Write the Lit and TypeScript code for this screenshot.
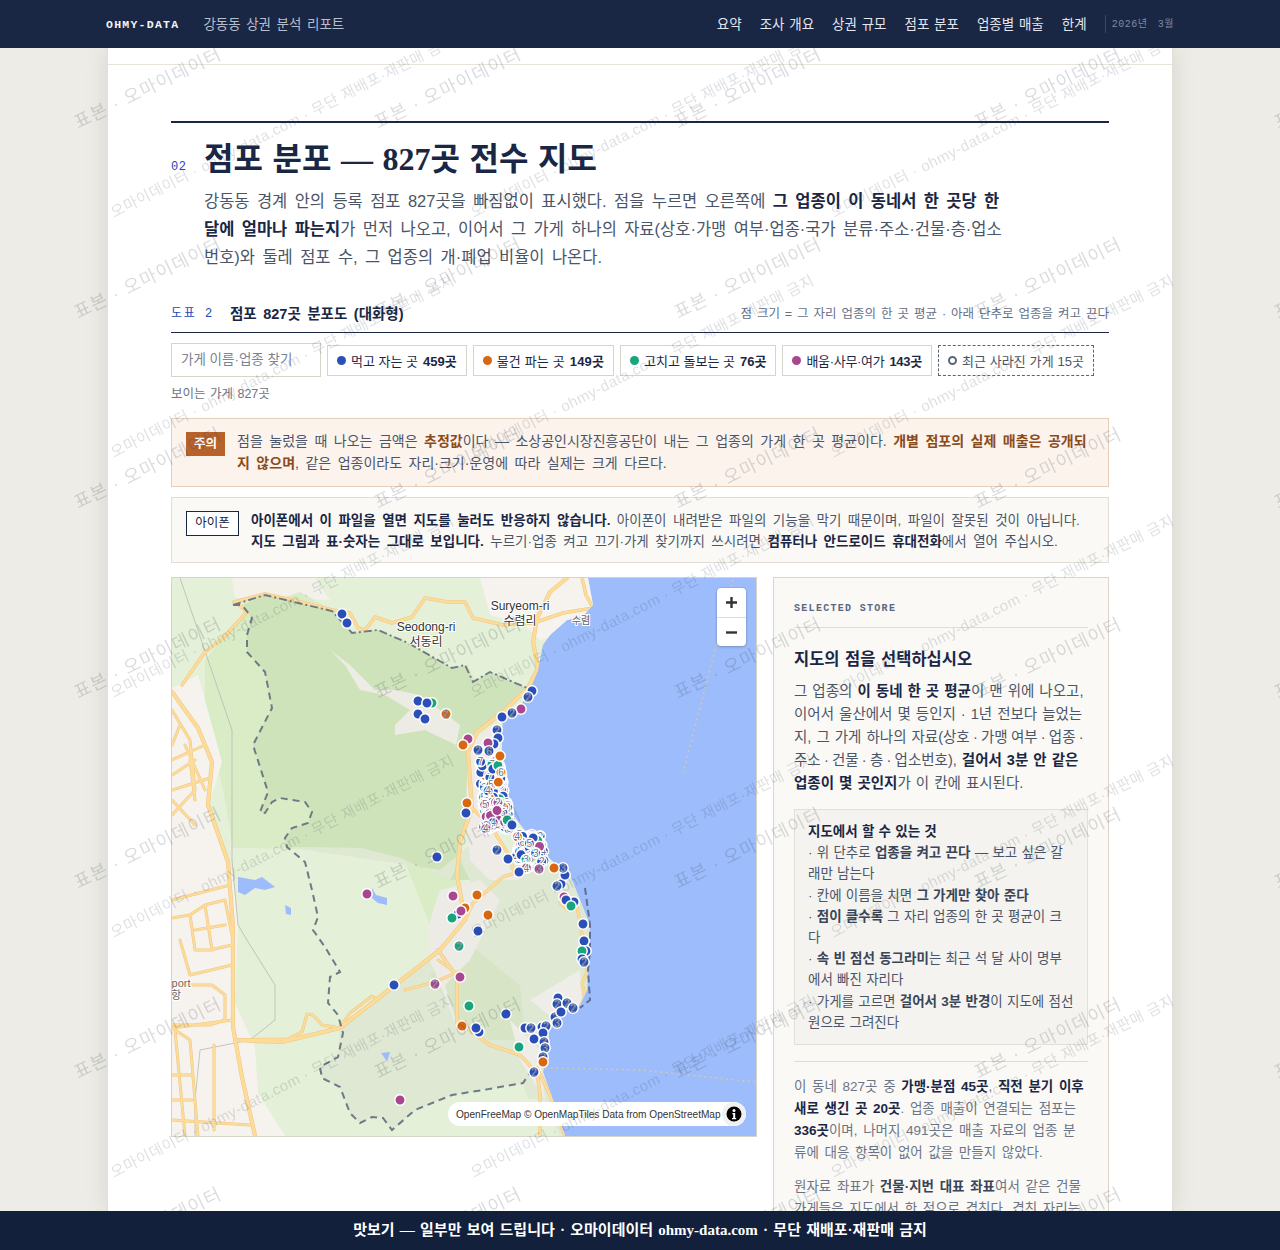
import { LitElement, html, css, svg } from "lit";
import { customElement } from "lit/decorators.js";

const BLUE = "#2a4fb9", ORANGE = "#d9670f", GREEN = "#17a57c", PURPLE = "#a8478f";
type M = [number, number, string, string?];

const roads: [string, number][] = [
  ["M234 602L265 594L292 600L332 610L350 613L358 628L365 630L375 617L392 623L412 617L425 598L448 602L465 602L473 618L503 625L533 623L563 613L593 608L586 595L582 578", 2.5],
  ["M567 578L550 592L537 618L533 642L538 668L528 688L503 712L477 732L468 752L472 808L460 842L457 875L465 920L440 950L340 1028L282 1042L235 1040", 3.2],
  ["M472 808L490 825L507 852L515 873L503 877L473 903L465 920", 2.4],
  ["M438 950L457 977L457 1023L463 1025L490 1045L520 1055L537 1073L540 1093L540 1136", 2.6],
  ["M537 1068L550 1095L565 1136", 2.6],
  ["M560 903L568 910L577 907L583 940L587 973L582 983L585 997L580 1007", 2.2],
  ["M405 990L435 982L458 972", 2],
  ["M340 1027L350 1013L372 996L378 1000", 2],
  ["M237 1040L288 1039L302 1032L307 1014L313 1015L322 1025L335 1027", 2.2],
  ["M172 692L198 728L212 762L208 805L228 862L233 927L233 1027L242 1077L255 1136", 3.2],
  ["M182 685L205 652L223 638L247 612L235 602", 2.4],
  ["M172 710L190 740L195 790M172 760L205 745M172 790L210 778M172 800L195 825M195 790L172 815M190 760L195 800M180 725L172 745M195 760L172 775M185 745L205 790", 2],
  ["M172 900L230 885M172 918L190 915L205 905L225 900L232 935M190 915L195 950L210 950L232 945M195 930L225 925M205 905L212 950M180 940L190 975L232 965M172 985L212 985L225 995L225 1020L210 1025L172 1025M232 1020L172 1028L190 1040L198 1136M175 1030L185 1136M172 1075L192 1075M172 1100L192 1100M172 1120L250 1125M214 1045L214 1130", 2],
  ["M438 960L455 972", 1.8],
];

const named: M[] = [
  [342,614,BLUE],[347,623,BLUE],[418,701,BLUE],[432,703,GREEN],[427,703,BLUE],[418,714,BLUE],[425,719,BLUE],[446,714,ORANGE,"2"],[437,857,BLUE],
  [532,691,BLUE],[528,697,BLUE,"2"],[521,709,PURPLE],[512,713,BLUE,"2"],[502,717,BLUE],[497,730,BLUE,"2"],[498,738,BLUE],[494,744,BLUE],[468,739,PURPLE],[463,745,ORANGE],[478,750,BLUE,"2"],[488,743,PURPLE],[489,751,BLUE,"6"],
  [467,803,ORANGE],[466,813,BLUE],[497,850,BLUE,"2"],[508,859,BLUE],[519,872,BLUE],
  [367,894,PURPLE],[453,896,PURPLE],[458,914,BLUE],[452,918,GREEN],[465,908,ORANGE],[461,911,PURPLE],[459,946,GREEN,"2"],[460,977,PURPLE],[435,984,PURPLE,"2"],[394,985,BLUE],[462,1026,ORANGE],[400,1100,PURPLE],
  [477,895,ORANGE],[488,915,ORANGE],[478,931,BLUE],[469,1006,GREEN],[506,1014,BLUE],[479,1032,BLUE],[476,1028,BLUE],[519,1047,GREEN],[534,1039,BLUE],[534,1072,BLUE,"2"],
  [525,1028,BLUE],[531,1028,BLUE,"2"],[542,1027,BLUE],[546,1026,BLUE,"2"],[543,1033,BLUE],[544,1042,BLUE,"3"],[545,1048,BLUE,"3"],[543,1057,BLUE,"3"],[543,1062,ORANGE],
  [558,998,BLUE],[557,1004,BLUE,"2"],[567,1003,BLUE,"2"],[573,1008,BLUE,"2"],[555,1017,BLUE,"2"],[557,1023,BLUE,"3"],[561,1012,BLUE],
  [583,924,BLUE],[584,941,BLUE],[586,951,BLUE],[582,951,GREEN],[582,959,BLUE],[584,962,BLUE,"2"],
  [561,884,BLUE],[557,886,BLUE,"2"],[564,897,PURPLE],[574,902,BLUE],[566,900,BLUE],[571,906,GREEN],[565,875,BLUE],[563,868,BLUE,"3"],
  [500,756,ORANGE],[512,825,BLUE],[554,868,ORANGE],[539,869,PURPLE,"3"],
];

function cluster(): M[] {
  let s = 1;
  const r = () => { const v = Math.sin(s++ * 12.9898) * 43758.5453; return v - Math.floor(v); };
  const colors = [BLUE, BLUE, BLUE, BLUE, PURPLE, BLUE, ORANGE, GREEN, BLUE, PURPLE];
  const areas = [[480, 760, 24, 42, 90], [482, 802, 27, 27, 80], [516, 834, 28, 34, 80]];
  const out: M[] = [];
  for (const [x, y, w, h, n] of areas) {
    for (let i = 0; i < n; i++) {
      const lbl = r() < 0.75 ? String(2 + Math.floor(r() * 6)) : undefined;
      out.push([x + r() * w, y + r() * h, colors[Math.floor(r() * colors.length)], lbl]);
    }
  }
  return out;
}
const dense = cluster();

@customElement("app-root")
export class AppRoot extends LitElement {
  static styles = css`
    :host { display: block; position: relative; width: 1280px; height: 1250px; overflow: hidden; background: #edece7; color: #1a2744;
      font-family: "Liberation Sans", "Noto Sans CJK KR", sans-serif; }
    * { box-sizing: border-box; }
    .shell { display: flex; flex-direction: column; height: 1250px; }
    header { position: relative; z-index: 10; flex: none; height: 48px; background: #1a2744; display: flex; align-items: center; padding: 0 106px 3px; }
    .brand { font: bold 11.5px "Liberation Mono", monospace; letter-spacing: 1.25px; color: #f3f4f7; margin: 3px 24px 0 0; }
    .sub { font-size: 13.5px; word-spacing: 1.8px; color: #b6bdcc; }
    nav { margin-left: auto; display: flex; align-items: center; gap: 18px; font-size: 13.5px; word-spacing: 1px; color: #e3e6ed; }
    .date { font: 10px "Liberation Mono", "Noto Sans CJK KR", monospace; color: #7f8aa1; border-left: 1px solid #3a4765; height: 18px; line-height: 20px; margin-top: 3px; padding-left: 6px; letter-spacing: .55px; white-space: pre; word-spacing: -1.5px; }
    main { flex: 1; min-height: 0; overflow: hidden; width: 1066px; margin: 0 auto; background: #fff; box-shadow: 0 0 22px rgba(60,50,30,.12); border-left: 1px solid #e2dfd7; border-right: 1px solid #e2dfd7; padding: 16px 63px 0; }
    .toprule { height: 1px; background: #e8e4dc; margin: 0 -63px 56px; }
    .sec { border-top: 2px solid #1a2744; display: grid; grid-template-columns: 33px 1fr; padding-top: 13px; }
    .num { font: 12px "Liberation Mono", monospace; color: #2148b8; letter-spacing: .6px; padding-top: 24px; }
    h1 { margin: 1px 0 0; font: bold 32px/44px "Liberation Serif", "Noto Sans CJK KR", serif; word-spacing: 1.6px; color: #1a2744; }
    .lead { margin: 6px 0 0; grid-column: 2; width: 800px; font-size: 16.5px; word-spacing: 2.8px; line-height: 28px; color: #4a5568; }
    .lead b { color: #1a2744; }
    .fighead { display: flex; align-items: center; margin-top: 29px; height: 33px; padding-bottom: 8px; border-bottom: 1px solid #1a2744; }
    .figno { font: 12px "Liberation Mono", "Noto Sans CJK KR", monospace; color: #2148b8; letter-spacing: 1.6px; width: 59px; white-space: pre; }
    .figt { font-weight: bold; font-size: 14.5px; word-spacing: 2.5px; }
    .fign { margin-left: auto; font-size: 12.5px; word-spacing: 1.5px; color: #667085; }
    .ctrl { display: flex; align-items: center; gap: 6px; margin-top: 10px; height: 34px; }
    .search { width: 150px; height: 34px; border: 1px solid #d9d4c9; padding: 0 9px; font-size: 13.5px; line-height: 32px; color: #7b8290; background: #fff; }
    .chip { height: 31px; border: 1px solid #d9d4c9; background: #fff; display: flex; align-items: center; gap: 5px; padding: 0 9px; font-size: 13px; color: #1a2744; white-space: nowrap; }
    .chip.c2 { letter-spacing: .15px; }
    .chip.c4 { letter-spacing: -.3px; }
    .chip i { width: 9px; height: 9px; border-radius: 50%; }
    .chip.gone { border: 1px dashed #5b6578; color: #4a5568; letter-spacing: .1px; }
    .chip.gone i { border: 2px solid #5b6578; }
    .count { font-size: 12.5px; word-spacing: 1px; color: #6b7585; margin: 9px 0 16px; line-height: 16px; }
    .note { display: flex; align-items: flex-start; gap: 12px; padding: 11px 14px 12px; border: 1px solid #e5cfbb; background: #fbf3ec; font-size: 14px; word-spacing: 2.6px; line-height: 22px; color: #4a5568; }
    .note b { color: #8a4b1c; }
    .badge { flex: none; background: #b8622b; color: #fff; font-weight: bold; font-size: 12.5px; word-spacing: 0; height: 24px; width: 39px; line-height: 24px; text-align: center; margin-top: 2px; }
    .note.ios { margin-top: 10px; padding: 12px 14px 10px; background: #faf9f6; border-color: #e2ded4; font-size: 13.5px; word-spacing: 2.7px; line-height: 21px; }
    .note.ios b { color: #1a2744; }
    .ios .badge { background: #fff; color: #1a2744; border: 1px solid #1a2744; width: 53px; height: 25px; line-height: 23px; font-weight: normal; margin-top: 1px; }
    .cols { display: grid; grid-template-columns: 586px 336px; gap: 16px; margin-top: 14px; align-items: start; }
    .map { position: relative; height: 560px; border: 1px solid #d8d3c8; overflow: hidden; background: #9dbcfb; }
    .map svg { display: block; }
    .zoom { position: absolute; left: 545px; top: 10px; width: 29px; height: 58px; background: #fff; border-radius: 4px; box-shadow: 0 0 0 1px rgba(0,0,0,.05), 0 1px 3px rgba(0,0,0,.2); display: grid; grid-template-rows: 1fr 1fr; }
    .zoom div { display: flex; align-items: center; justify-content: center; }
    .zoom div + div { border-top: 1px solid #ddd; }
    .attr { position: absolute; right: 10px; bottom: 10px; height: 24px; width: 298px; border-radius: 12px; background: #fff; display: flex; align-items: center; padding-left: 8px; font-size: 10.1px; color: #333; white-space: nowrap; }
    .attr .ico { position: absolute; right: 0; top: 0; width: 24px; height: 24px; border-radius: 50%; background: #f0f0f0; display: flex; align-items: center; justify-content: center; }
    aside { border: 1px solid #ddd6c8; background: #faf9f5; padding: 0 20px 30px; height: 800px; }
    .kicker { font: bold 10px "Liberation Mono", monospace; letter-spacing: 1.3px; color: #5b6780; padding: 24px 0 12px; line-height: 13px; border-bottom: 1px solid #e1dcd1; }
    h2 { margin: 19px 0 9px; font-size: 16.5px; word-spacing: 1px; line-height: 24px; font-weight: bold; }
    .ptxt { margin: 0; font-size: 14.5px; word-spacing: 1px; line-height: 23px; color: #4a5568; }
    .ptxt b { color: #1a2744; }
    .ptxt .t { word-spacing: -.8px; }
    .tips { margin-top: 14px; background: #f4f3ef; border: 1px solid #e4e0d6; padding: 11px 13px 11px; font-size: 13.5px; word-spacing: .5px; line-height: 21.2px; color: #4a5568; }
    .tips strong { color: #1a2744; display: block; }
    .tips b { color: #3a4558; }
    .sep { height: 1px; background: #e1dcd1; margin: 16px 0 14px; }
    .small { margin: 0 0 12px; padding-right: 2px; font-size: 13.5px; word-spacing: 1.9px; line-height: 22px; color: #6b7585; }
    .small b { color: #1a2744; }
    .small b.m { color: #3a4558; }
    footer { position: relative; z-index: 10; flex: none; height: 39px; background: #12203c; color: #fff; font: bold 15px/38px "Liberation Serif", "Noto Sans CJK KR", serif; word-spacing: 1.5px; text-align: center; }
    .wm { position: absolute; left: 0; top: 0; z-index: 5; pointer-events: none; }
  `;

  private mapSvg() {
    const d = roads;
    return html`<svg width="584" height="558" viewBox="172 578 584 558" xmlns="http://www.w3.org/2000/svg">
      ${svg`
      <defs><clipPath id="land"><path d="M172 578L588 578L593 605L583 616L567 620L550 635L543 645L538 670L530 690L520 707L503 715L502 735L502 795L513 815L540 850L557 865L567 868L580 900L590 925L590 950L588 970L587 990L580 1005L567 1010L550 1025L547 1050L543 1072L553 1100L565 1136L172 1136Z"/></clipPath></defs>
      <rect x="172" y="578" width="584" height="558" fill="#9dbcfb"/>
      <g clip-path="url(#land)">
        <rect x="172" y="578" width="584" height="558" fill="#e4f0d7"/>
        <path d="M232 578L315 578L330 600L235 598Z" fill="#f3f1ea"/>
        <path d="M480 578L600 578L600 625L540 640L525 625L490 615Z" fill="#f6f3ef"/>
        <path d="M205 660L247 610L300 592L332 610L352 632L382 630L408 645L452 668L467 665L477 683L490 672L527 690L505 712L480 730L468 752L472 808L458 845L455 880L470 920L440 950L400 850L233 848L225 800L205 700Z" fill="#d9ecc5"/>
        <path d="M247 635L252 618L242 605L265 595L298 603L332 611L352 633L378 630L408 643L452 668L467 665L473 682L490 672L527 688L505 712L478 732L468 752L472 808L460 842L470 880L450 880L400 858L360 848L287 847L285 838L292 828L308 823L312 812L305 802L280 798L272 802L265 813L260 812L268 792L253 745L272 708L265 672L247 652Z" fill="#cee3ba"/>
        <path d="M287 847L360 848L400 858L450 880L460 860L475 890L470 925L438 950L340 1028L338 1057L320 1067L322 1078L340 1087L350 1113L360 1123L372 1117L383 1118L392 1130L415 1110L452 1095L523 1083L540 1136L565 1136L543 1060L590 1000L590 880L540 860L500 870L470 845L440 870Z" fill="#dfe8d2"/>
        <path d="M430 975L470 945L520 985L525 1040L490 1040L460 1025Z" fill="#d7e5c6"/>
        <path d="M172 688L198 675L222 762L208 808L222 842L233 875L238 920L235 1003L255 1047L258 1093L285 1136L172 1136Z" fill="#f6f3ef"/>
        <path d="M330 650L350 665L375 690L395 690L420 695L460 725L456 745L425 730L395 735L395 725L410 710L385 695L360 690L345 665Z" fill="#ecebe4"/>
        <path d="M468 745L500 720L502 860L520 880L490 880L470 860L466 810Z" fill="#efece7"/>
        <path d="M440 890L480 880L500 900L470 960L445 985L462 1040L430 960L430 920Z" fill="#ecebe6"/>
        <path d="M555 985L580 970L582 1005L555 1020L530 1000Z" fill="#efede8"/>
        <path d="M510 1020L540 1050L545 1100L520 1060Z" fill="#efede8"/>
        <path d="M440 1110L500 1095L545 1100L560 1136L440 1136Z" fill="#e4f0d7"/>
        <path d="M238 877L255 880L262 877L275 887L265 890L255 888L245 895L238 892ZM285 905L291 908L291 915L286 914ZM372 888L376 895L387 898L387 905L378 903L372 898ZM381 1053L390 1052L387 1062L384 1057Z" fill="#9dbcfb"/>
        <path d="M180 578L232 730L232 860L238 925L250 945L275 985L275 1020L250 1040L200 1050L195 1100L195 1136" fill="none" stroke="#b9b9b4" stroke-width=".8"/>
        <g fill="none" stroke-linejoin="round" stroke-linecap="round">
          ${d.map(([p, w]) => svg`<path d=${p} stroke="#f0c684" stroke-width=${w + 1}/>`)}
          ${d.map(([p, w]) => svg`<path d=${p} stroke="#fcdc98" stroke-width=${w}/>`)}
        </g>
      </g>
      <path d="M733 580L683 773" stroke="#d3c7ae" stroke-width="1.6" stroke-dasharray="2 3.5" fill="none"/>
      <path d="M545 1068L640 1070L755 1082" stroke="#d3c7ae" stroke-width="1.6" stroke-dasharray="2 3.5" fill="none"/>
      <path d="M233 605L265 595L298 603L332 611L352 633L378 630L408 643L452 668L465 665L473 682L490 672L527 688" fill="none" stroke="#6e7a86" stroke-width="1.9" stroke-dasharray="8 3 2 3"/>
      <path d="M233 605L242 605L252 618L247 635L247 652L265 672L272 708L253 745L268 792L260 812L265 813L272 802L280 798L305 802L312 812L308 823L292 828L285 838L287 847L305 862L307 870L312 890L318 917L313 930L325 947L340 972L330 977L328 1003L338 1015L343 1033L338 1057L320 1067L322 1078L340 1087L350 1113L360 1123L372 1117L383 1118L392 1130L415 1110L452 1095L483 1090L523 1083L530 1073" fill="none" stroke="#6e7a86" stroke-width="2" stroke-dasharray="7 5"/>
      <path d="M585 888L590 925L590 950L588 970L590 1000L580 1008" fill="none" stroke="#5e6f95" stroke-width="2" stroke-dasharray="7 4"/>
      <g font-family="'Liberation Sans','Noto Sans CJK KR',sans-serif" font-size="12" text-anchor="middle" fill="#333" stroke="#fff" stroke-width="2" paint-order="stroke">
        <text x="520" y="610">Suryeom-ri</text><text x="520" y="625">수렴리</text>
        <text x="426" y="631">Seodong-ri</text><text x="426" y="646">서동리</text>
        <text x="581" y="624" font-size="10" fill="#666">수렴</text>
        <text x="181" y="987" font-size="11" fill="#666">port</text><text x="176" y="999" font-size="11" fill="#666">항</text>
      </g>
      <g stroke="#fff" stroke-width="1.5">
        ${dense.map(([x, y, c, l]) => svg`<circle cx=${x} cy=${y} r="5.2" fill=${c}/>${l ? svg`<text x=${x} y=${y + 3.6} font-family="'Liberation Sans',sans-serif" font-size="10" text-anchor="middle" fill="#6a7488" stroke="#fff" stroke-width="2.2" paint-order="stroke">${l}</text>` : ""}`)}
        ${named.map(([x, y, c, l]) => svg`<circle cx=${x} cy=${y} r="5.2" fill=${c}/>${l ? svg`<text x=${x} y=${y + 3.6} font-family="'Liberation Sans',sans-serif" font-size="10" text-anchor="middle" fill="#fff" stroke="#59647c" stroke-width=".5">${l}</text>` : ""}`)}
      </g>`}
    </svg>`;
  }

  render() {
    const wmA = "표본 · 오마이데이터";
    const wmB = "오마이데이터 · ohmy-data.com · 무단 재배포·재판매 금지";
    return html`
      <div class="shell">
        <header>
          <span class="brand">OHMY-DATA</span>
          <span class="sub">강동동 상권 분석 리포트</span>
          <nav>
            <span>요약</span><span>조사 개요</span><span>상권 규모</span><span>점포 분포</span><span>업종별 매출</span><span>한계</span>
            <span class="date">2026년  3월</span>
          </nav>
        </header>
        <main>
          <div class="toprule"></div>
          <section class="sec">
            <div class="num">02</div>
            <h1>점포 분포 — 827곳 전수 지도</h1>
            <p class="lead">강동동 경계 안의 등록 점포 827곳을 빠짐없이 표시했다. 점을 누르면 오른쪽에 <b>그 업종이 이 동네서 한 곳당 한 달에 얼마나 파는지</b>가 먼저 나오고, 이어서 그 가게 하나의 자료(상호·가맹 여부·업종·국가 분류·주소·건물·층·업소번호)와 둘레 점포 수, 그 업종의 개·폐업 비율이 나온다.</p>
          </section>
          <div class="fighead">
            <span class="figno">도표 2</span>
            <span class="figt">점포 827곳 분포도 (대화형)</span>
            <span class="fign">점 크기 = 그 자리 업종의 한 곳 평균 · 아래 단추로 업종을 켜고 끈다</span>
          </div>
          <div class="ctrl">
            <div class="search">가게 이름·업종 찾기</div>
            <div class="chip"><i style="background:${BLUE}"></i>먹고 자는 곳 <b>459곳</b></div>
            <div class="chip c2"><i style="background:${ORANGE}"></i>물건 파는 곳 <b>149곳</b></div>
            <div class="chip"><i style="background:${GREEN}"></i>고치고 돌보는 곳 <b>76곳</b></div>
            <div class="chip c4"><i style="background:${PURPLE}"></i>배움·사무·여가 <b>143곳</b></div>
            <div class="chip gone"><i></i>최근 사라진 가게 15곳</div>
          </div>
          <div class="count">보이는 가게 827곳</div>
          <div class="note">
            <span class="badge">주의</span>
            <div>점을 눌렀을 때 나오는 금액은 <b>추정값</b>이다 — 소상공인시장진흥공단이 내는 그 업종의 가게 한 곳 평균이다. <b>개별 점포의 실제 매출은 공개되지 않으며</b>, 같은 업종이라도 자리·크기·운영에 따라 실제는 크게 다르다.</div>
          </div>
          <div class="note ios">
            <span class="badge">아이폰</span>
            <div><b>아이폰에서 이 파일을 열면 지도를 눌러도 반응하지 않습니다.</b> 아이폰이 내려받은 파일의 기능을 막기 때문이며, 파일이 잘못된 것이 아닙니다. <b>지도 그림과 표·숫자는 그대로 보입니다.</b> 누르기·업종 켜고 끄기·가게 찾기까지 쓰시려면 <b>컴퓨터나 안드로이드 휴대전화</b>에서 열어 주십시오.</div>
          </div>
          <div class="cols">
            <div class="map">
              ${this.mapSvg()}
              <div class="zoom">
                <div><svg width="13" height="13" viewBox="0 0 13 13"><path d="M6.5 1v11M1 6.5h11" stroke="#333" stroke-width="2.4"/></svg></div>
                <div><svg width="13" height="13" viewBox="0 0 13 13"><path d="M1 6.5h11" stroke="#333" stroke-width="2.4"/></svg></div>
              </div>
              <div class="attr">OpenFreeMap © OpenMapTiles Data from OpenStreetMap
                <span class="ico"><svg width="16" height="16" viewBox="0 0 16 16"><circle cx="8" cy="8" r="7.5" fill="#000"/><circle cx="8" cy="4.4" r="1.5" fill="#fff"/><path d="M6.4 7h2.8v5h1v1.2H6v-1.2h1.2V8.2H6.4z" fill="#fff"/></svg></span>
              </div>
            </div>
            <aside>
              <div class="kicker">SELECTED STORE</div>
              <h2>지도의 점을 선택하십시오</h2>
              <p class="ptxt">그 업종의 <b>이 동네 한 곳 평균</b>이 맨 위에 나오고, 이어서 울산에서 몇 등인지 · 1년 전보다 늘었는지, 그 가게 하나의 자료<span class="t">(상호 · 가맹 여부 · 업종 · 주소 · 건물 · 층 · 업소번호),</span> <b>걸어서 3분 안 같은 업종이 몇 곳인지</b>가 이 칸에 표시된다.</p>
              <div class="tips">
                <strong>지도에서 할 수 있는 것</strong>
                · 위 단추로 <b>업종을 켜고 끈다</b> — 보고 싶은 갈래만 남는다<br>
                · 칸에 이름을 치면 <b>그 가게만 찾아 준다</b><br>
                · <b>점이 클수록</b> 그 자리 업종의 한 곳 평균이 크다<br>
                · <b>속 빈 점선 동그라미</b>는 최근 석 달 사이 명부에서 빠진 자리다<br>
                · 가게를 고르면 <b>걸어서 3분 반경</b>이 지도에 점선 원으로 그려진다
              </div>
              <div class="sep"></div>
              <p class="small">이 동네 827곳 중 <b>가맹·분점 45곳</b>, <b>직전 분기 이후 새로 생긴 곳 20곳</b>. 업종 매출이 연결되는 점포는 <b>336곳</b>이며, 나머지 491곳은 매출 자료의 업종 분류에 대응 항목이 없어 값을 만들지 않았다.</p>
              <p class="small">원자료 좌표가 <b class="m">건물·지번 대표 좌표</b>여서 같은 건물 가게들은 지도에서 한 점으로 겹친다. 겹친 자리는 숫자로 표시된다.</p>
            </aside>
          </div>
        </main>
        <footer>맛보기 — 일부만 보여 드립니다 · 오마이데이터 ohmy-data.com · 무단 재배포·재판매 금지</footer>
      </div>
      <svg class="wm" width="1280" height="1250" viewBox="0 0 1280 1250">
        <defs>
          <pattern id="pa" patternUnits="userSpaceOnUse" x="0" y="0" width="300" height="190">
            <text transform="translate(78 129) rotate(-26)" font-family="'Liberation Sans','Noto Sans CJK KR',sans-serif" font-size="18" letter-spacing="1.2" fill="rgba(30,40,60,.17)">${wmA}</text>
          </pattern>
          <pattern id="pb" patternUnits="userSpaceOnUse" x="100" y="10" width="360" height="240">
            <text transform="translate(14 208) rotate(-27)" font-family="'Liberation Sans','Noto Sans CJK KR',sans-serif" font-size="15" letter-spacing=".5" fill="rgba(30,40,60,.15)">${wmB}</text>
          </pattern>
        </defs>
        <rect width="1280" height="1250" fill="url(#pa)"/>
        <rect x="107" width="1066" height="1250" fill="url(#pb)"/>
      </svg>
    `;
  }
}
